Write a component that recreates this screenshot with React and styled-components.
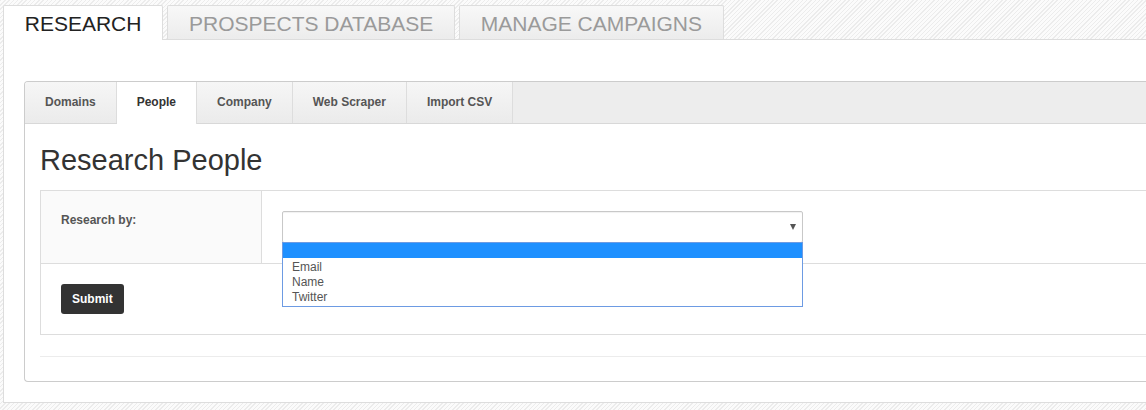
import React from "react";
import styled, { createGlobalStyle } from "styled-components";

const GlobalStyle = createGlobalStyle`
  html, body {
    margin: 0;
    padding: 0;
    overflow: hidden;
  }
  body {
    font-family: "Liberation Sans", Arial, sans-serif;
    background: repeating-linear-gradient(-45deg, #fbfbfb 0 2px, #ececec 2px 3px);
    color: #333;
  }
  * { box-sizing: border-box; }
`;

const Page = styled.div`
  width: 1220px;
  padding: 5px 0 0 3px;
`;

const TopTabs = styled.div`
  display: flex;
  align-items: flex-end;
  gap: 4px;
`;

const TopTab = styled.div`
  position: relative;
  z-index: 1;
  display: flex;
  align-items: center;
  height: ${(p) => (p.$active ? "35px" : "34px")};
  margin-bottom: ${(p) => (p.$active ? "-1px" : "0")};
  padding: 2px 20.75px 0 20.75px;
  font-size: 21px;
  text-transform: uppercase;
  border: 1px solid #ddd;
  border-bottom: none;
  border-radius: 2px 2px 0 0;
  color: ${(p) => (p.$active ? "#222" : "#9a9a9a")};
  background: ${(p) =>
    p.$active ? "#fff" : "linear-gradient(#f8f8f8, #ececec)"};
`;

const OuterPanel = styled.div`
  background: #fff;
  border: 1px solid #ddd;
  padding: 41px 0 20px 20px;
`;

const InnerPanel = styled.div`
  border: 1px solid #ccc;
  border-radius: 4px 0 0 4px;
  border-right: none;
  background: #fff;
  overflow: hidden;
`;

const SubTabs = styled.div`
  display: flex;
  height: 42px;
  background: #ededed;
  border-bottom: 1px solid #d8d8d8;
`;

const SubTab = styled.div`
  display: flex;
  align-items: center;
  padding: 0 20px 2px 20px;
  height: ${(p) => (p.$active ? "42px" : "41px")};
  font-size: 12px;
  font-weight: bold;
  color: ${(p) => (p.$active ? "#333" : "#555")};
  background: ${(p) =>
    p.$active ? "#fff" : "linear-gradient(#f6f6f6, #ebebeb)"};
  border-right: 1px solid #ddd;
  ${(p) => p.$active && "position: relative; z-index: 1;"}
`;

const Content = styled.div`
  padding: 21px 0 0 15px;
`;

const Heading = styled.h3`
  margin: 0 0 13px 0;
  font-size: 29px;
  line-height: 1.1;
  font-weight: normal;
  color: #333;
`;

const Table = styled.div`
  border: 1px solid #ddd;
  border-right: none;
`;

const Row = styled.div`
  display: flex;
  border-top: ${(p) => (p.$first ? "none" : "1px solid #ddd")};
`;

const LabelCell = styled.div`
  width: 221px;
  flex: none;
  padding: 21px 20px 20px 20px;
  background: #fafafa;
  border-right: 1px solid #ddd;
  font-size: 12px;
  line-height: 17px;
  font-weight: bold;
  color: #555;
`;

const FieldCell = styled.div`
  flex: 1;
  padding: 20px;
`;

const SelectWrap = styled.div`
  position: relative;
  width: 521px;
`;

const SelectBox = styled.div`
  height: 32px;
  border: 1px solid #c8c8c8;
  border-radius: 2px;
  background: #fff;
  box-shadow: inset 0 1px 1px rgba(0, 0, 0, 0.06);
  display: flex;
  align-items: center;
  justify-content: flex-end;
  padding-right: 6px;
`;

const Arrow = styled.span`
  width: 0;
  height: 0;
  border-left: 3.5px solid transparent;
  border-right: 3.5px solid transparent;
  border-top: 6px solid #555;
`;

const DropList = styled.div`
  position: absolute;
  left: 0;
  top: 31px;
  width: 521px;
  background: #fff;
  border: 1px solid #6d9be3;
  padding-bottom: 3px;
  z-index: 5;
`;

const Option = styled.div`
  height: 15px;
  line-height: 15px;
  padding: 2px 9px 0 9px;
  font-size: 12px;
  color: #555;
  white-space: nowrap;
  background: ${(p) => (p.$selected ? "#1e90ff" : "transparent")};
`;

const ActionCell = styled.div`
  padding: 20px;
`;

const SubmitButton = styled.button`
  height: 30px;
  padding: 0 11px;
  border: none;
  border-radius: 3px;
  background: #333;
  color: #fff;
  font-family: "Liberation Sans", Arial, sans-serif;
  font-size: 12px;
  font-weight: bold;
`;

const FooterLine = styled.div`
  margin-top: 21px;
  height: 25px;
  border-top: 1px solid #ececec;
`;

export default function App() {
  const outerTabs = ["Research", "Prospects Database", "Manage Campaigns"];
  const subTabs = ["Domains", "People", "Company", "Web Scraper", "Import CSV"];
  const options = ["", "Email", "Name", "Twitter"];
  return (
    <>
      <GlobalStyle />
      <Page>
        <TopTabs>
          {outerTabs.map((t, i) => (
            <TopTab key={t} $active={i === 0}>
              {t}
            </TopTab>
          ))}
        </TopTabs>
        <OuterPanel>
          <InnerPanel>
            <SubTabs>
              {subTabs.map((t) => (
                <SubTab key={t} $active={t === "People"}>
                  {t}
                </SubTab>
              ))}
            </SubTabs>
            <Content>
              <Heading>Research People</Heading>
              <Table>
                <Row $first>
                  <LabelCell>Research by:</LabelCell>
                  <FieldCell>
                    <SelectWrap>
                      <SelectBox>
                        <Arrow />
                      </SelectBox>
                      <DropList>
                        {options.map((o, i) => (
                          <Option key={i} $selected={i === 0}>
                            {o}
                          </Option>
                        ))}
                      </DropList>
                    </SelectWrap>
                  </FieldCell>
                </Row>
                <Row>
                  <ActionCell>
                    <SubmitButton>Submit</SubmitButton>
                  </ActionCell>
                </Row>
              </Table>
              <FooterLine />
            </Content>
          </InnerPanel>
        </OuterPanel>
      </Page>
    </>
  );
}
